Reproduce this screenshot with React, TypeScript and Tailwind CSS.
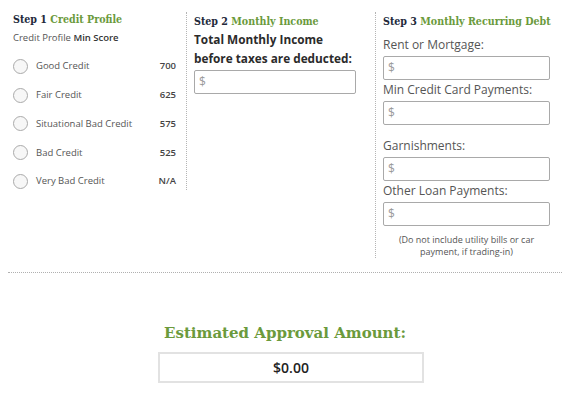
import React from "react";

const slab = { fontFamily: '"DejaVu Serif", "Liberation Serif", serif' };

function Heading({ step, title }: { step: string; title: string }) {
  return (
    <div className="text-[10.6px] font-bold font-stretch-condensed leading-[14px] whitespace-nowrap" style={slab}>
      <span className="text-[#22293a]">{step} </span>
      <span className="text-[#6b9a3c]">{title}</span>
    </div>
  );
}

function MoneyInput() {
  return (
    <div className="h-[24px] border border-[#a9a9a9] rounded-[2px] flex items-center px-[4px] text-[12px] text-[#9a9a9a] bg-white">
      $
    </div>
  );
}

const credits = [
  ["Good Credit", "700"],
  ["Fair Credit", "625"],
  ["Situational Bad Credit", "575"],
  ["Bad Credit", "525"],
  ["Very Bad Credit", "N/A"],
];

export default function App() {
  return (
    <div
      className="w-[570px] h-[400px] bg-white px-[10px] pt-[12px]"
      style={{ fontFamily: '"Open Sans", "Liberation Sans", sans-serif' }}
    >
      <div className="flex items-start">
        <div className="w-[178px] h-[178px] border-r border-dotted border-[#b5b5b5] pl-[3px] pr-[10px]">
          <Heading step="Step 1" title="Credit Profile" />
          <div className="mt-[5px] text-[9.5px] leading-[14px] text-[#555]">
            Credit Profile <span className="font-semibold text-[#333]">Min Score</span>
          </div>
          <div className="mt-[7px] flex flex-col">
            {credits.map(([label, score]) => (
              <div key={label} className="h-[28.75px] flex items-center">
                <div className="w-[15px] h-[15px] rounded-full border border-[#aaaaaa] bg-[#f7f7f7]" />
                <div className="ml-[8px] flex-1 text-[9.5px] text-[#555]">{label}</div>
                <div className="text-[9.5px] font-semibold text-[#444]">{score}</div>
              </div>
            ))}
          </div>
        </div>
        <div className="w-[189px] pl-[7px] pr-[19px] pt-[2px]">
          <Heading step="Step 2" title="Monthly Income" />
          <div className="mt-[2px] text-[11.8px] font-bold leading-[19px] text-[#2b2b2b] whitespace-nowrap">
            Total Monthly Income
            <br />
            before taxes are deducted:
          </div>
          <div className="mt-[2px]">
            <MoneyInput />
          </div>
        </div>
        <div className="w-[185px] h-[246px] border-l border-dotted border-[#b5b5b5] pl-[7px] pr-[10px] pt-[2px]">
          <Heading step="Step 3" title="Monthly Recurring Debt" />
          <div className="mt-[8px] text-[12px] leading-[18px] text-[#555]">Rent or Mortgage:</div>
          <div className="mt-[2px]"><MoneyInput /></div>
          <div className="mt-[1px] text-[12px] leading-[18px] text-[#555]">Min Credit Card Payments:</div>
          <div className="mt-[2px]"><MoneyInput /></div>
          <div className="mt-[12px] text-[12px] leading-[18px] text-[#555]">Garnishments:</div>
          <div className="mt-[2px]"><MoneyInput /></div>
          <div className="mt-[1px] text-[12px] leading-[18px] text-[#555]">Other Loan Payments:</div>
          <div className="mt-[2px]"><MoneyInput /></div>
          <div className="mt-[8px] text-[9px] leading-[12px] text-[#555] text-center">
            (Do not include utility bills or car
            <br />
            payment, if trading-in)
          </div>
        </div>
      </div>
      <div className="mt-[14px] mx-[-2px] border-t border-dotted border-[#b0b0b0]" />
      <div className="flex flex-col items-center">
        <div className="mt-[50px] text-[15px] font-bold leading-[20px] text-[#6b9a3c]" style={slab}>
          Estimated Approval Amount:
        </div>
        <div className="mt-[9px] ml-[12px] w-[266px] h-[31px] border-2 border-[#e2e2e2] flex items-center justify-center text-[14px] font-semibold text-[#222]">
          $0.00
        </div>
      </div>
    </div>
  );
}
